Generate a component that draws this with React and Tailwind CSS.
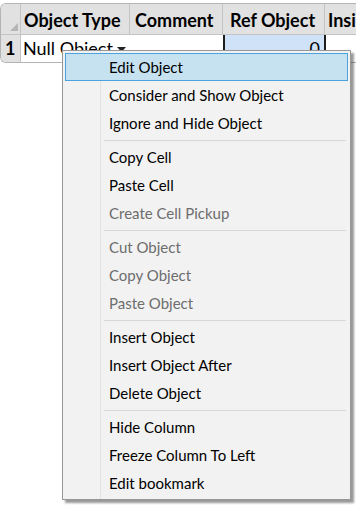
import React from 'react';

const groups = [
    [
        { label: 'Edit Object', active: true },
        { label: 'Consider and Show Object' },
        { label: 'Ignore and Hide Object' },
    ],
    [
        { label: 'Copy Cell' },
        { label: 'Paste Cell' },
        { label: 'Create Cell Pickup', disabled: true },
    ],
    [
        { label: 'Cut Object', disabled: true },
        { label: 'Copy Object', disabled: true },
        { label: 'Paste Object', disabled: true },
    ],
    [
        { label: 'Insert Object' },
        { label: 'Insert Object After' },
        { label: 'Delete Object' },
    ],
    [
        { label: 'Hide Column' },
        { label: 'Freeze Column To Left' },
        { label: 'Edit bookmark' },
    ],
];

function MenuItem({ item }) {
    return (
        <div
            className={`relative h-[28px] mx-[2px] flex items-center pl-[43px] border ${
                item.active ? 'bg-[#c6e1f0] border-[#4aa3dc]' : 'border-transparent'
            } ${item.disabled ? 'text-[#6d6d6d]' : 'text-black'}`}
        >
            {item.label}
        </div>
    );
}

function ContextMenu() {
    return (
        <div className="absolute left-[62px] top-[50px] w-[289px] bg-[#f2f2f2] border border-[#979797] py-[2px] shadow-[3px_3px_2px_rgba(0,0,0,0.4)] text-[15px]">
            {/* icon gutter line */}
            <div className="absolute left-[37px] top-0 bottom-0 w-px bg-[#e2e2e2]" />
            {groups.map((group, gi) => (
                <div key={gi}>
                    {gi > 0 && (
                        <div className="h-[6px] flex items-center pl-[41px] pr-[4px]">
                            <div className="h-px w-full bg-[#d7d7d7]" />
                        </div>
                    )}
                    {group.map((item) => (
                        <MenuItem key={item.label} item={item} />
                    ))}
                </div>
            ))}
        </div>
    );
}

export default function App() {
    return (
        <div className="relative w-[356px] h-[506px] bg-white overflow-hidden font-['Lato','Liberation_Sans',sans-serif] text-black">
            <div className="pt-[3px]">
                <div className="w-[400px] border border-r-0 border-[#b4b4b4] rounded-l-[6px] overflow-hidden">
                    {/* header */}
                    <div className="flex h-[30px] bg-[#e1e1e1] text-[18px] font-bold">
                        <div className="relative w-[20px] shrink-0 border-r border-[#c4c4c4]">
                            <svg className="absolute right-[2px] bottom-[3px]" width="8" height="8" viewBox="0 0 8 8">
                                <polygon points="8,0 8,8 0,8" fill="#b5b5b5" />
                            </svg>
                        </div>
                        <div className="w-[109px] shrink-0 border-r border-[#c4c4c4] flex items-center pt-[3px] pl-[3px]">Object Type</div>
                        <div className="w-[93px] shrink-0 border-r border-[#c4c4c4] flex items-center pt-[3px] pl-[5px]">Comment</div>
                        <div className="w-[102px] shrink-0 border-r border-[#c4c4c4] flex items-center pt-[3px] pl-[7px]">Ref Object</div>
                        <div className="flex-1 flex items-center pt-[3px] pl-[3px]">Insi</div>
                    </div>
                    {/* row 1 */}
                    <div className="flex h-[28px] text-[18px] border-t border-[#c4c4c4]">
                        <div className="w-[20px] shrink-0 bg-[#e1e1e1] border-r border-[#c4c4c4] flex items-center pl-[4px] font-bold">1</div>
                        <div className="w-[109px] shrink-0 flex items-center pl-[2px] gap-[4px]">
                            Null Object
                            <svg width="9" height="6" viewBox="0 0 9 6" className="mt-[2px]">
                                <polygon points="0,0 9,0 4.5,5" fill="#222" />
                            </svg>
                        </div>
                        <div className="w-[93px] shrink-0" />
                        <div className="w-[103px] shrink-0 bg-[#cfe2f8] border-x-2 border-[#1e1e1e] flex items-center justify-end pr-[4px]">0</div>
                        <div className="flex-1" />
                    </div>
                </div>
            </div>
            <ContextMenu />
        </div>
    );
}
